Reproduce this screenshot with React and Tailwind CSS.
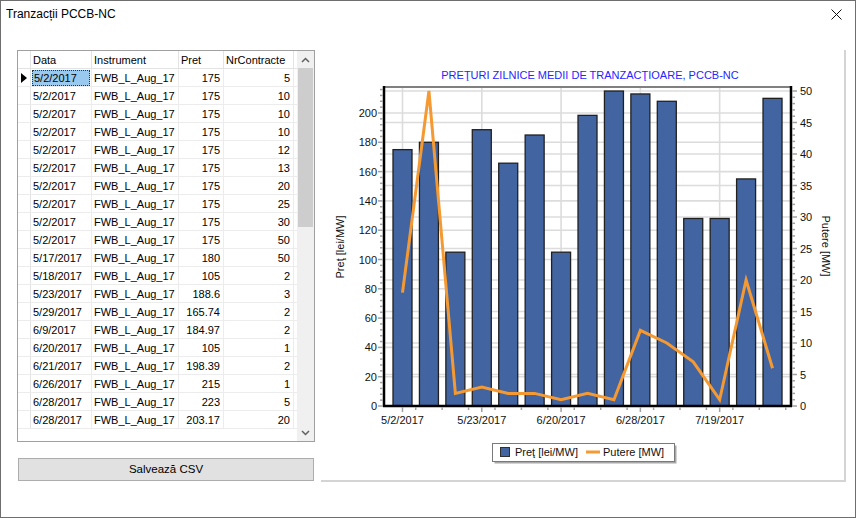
import React from "react";

const rows = [
  ["5/2/2017", "175", "5"],
  ["5/2/2017", "175", "10"],
  ["5/2/2017", "175", "10"],
  ["5/2/2017", "175", "10"],
  ["5/2/2017", "175", "12"],
  ["5/2/2017", "175", "13"],
  ["5/2/2017", "175", "20"],
  ["5/2/2017", "175", "25"],
  ["5/2/2017", "175", "30"],
  ["5/2/2017", "175", "50"],
  ["5/17/2017", "180", "50"],
  ["5/18/2017", "105", "2"],
  ["5/23/2017", "188.6", "3"],
  ["5/29/2017", "165.74", "2"],
  ["6/9/2017", "184.97", "2"],
  ["6/20/2017", "105", "1"],
  ["6/21/2017", "198.39", "2"],
  ["6/26/2017", "215", "1"],
  ["6/28/2017", "223", "5"],
  ["6/28/2017", "203.17", "20"],
];

const bars = [175, 180, 105, 188.6, 165.74, 184.97, 105, 198.39, 215, 213, 208, 128, 128, 155, 210];
const power = [18, 50, 2, 3, 2, 2, 1, 2, 1, 12, 10, 7, 1, 20, 6];

const X0 = 384, X1 = 791, Y0 = 87, Y1 = 406;
const cx = (i) => 402.5 + i * 26.43;
const ly = (v) => Y1 - v * 1.465;
const ry = (v) => Y1 - v * 6.3;

function Chart() {
  const leftMajor = [0, 20, 40, 60, 80, 100, 120, 140, 160, 180, 200];
  const leftMinor = [];
  for (let v = 0; v <= 216; v += 4) if (v % 20 !== 0) leftMinor.push(v);
  const rightMajor = [0, 5, 10, 15, 20, 25, 30, 35, 40, 45, 50];
  const rightMinor = [];
  for (let v = 0; v <= 50; v += 1) if (v % 5 !== 0) rightMinor.push(v);
  const xLabels = [
    [0, "5/2/2017"],
    [3, "5/23/2017"],
    [6, "6/20/2017"],
    [9, "6/28/2017"],
    [12, "7/19/2017"],
  ];
  const pts = power.map((v, i) => `${cx(i)},${ry(v)}`).join(" ");
  const font = { fontFamily: '"Liberation Sans", Arial, sans-serif' };
  return (
    <svg width="525" height="432" viewBox="321 50 525 432" style={font}>
      <text x="590" y="79" fontSize="11" fill="#2626ff" textAnchor="middle">
        PREŢURI ZILNICE MEDII DE TRANZACŢIOARE, PCCB-NC
      </text>
      {leftMajor.map((v) => (
        <line key={"lg" + v} x1={X0} x2={X1} y1={ly(v)} y2={ly(v)} stroke="#dcdcdc" strokeWidth="1.6" />
      ))}
      {rightMajor.map((v) => (
        <line key={"rg" + v} x1={X0} x2={X1} y1={ry(v)} y2={ry(v)} stroke="#dcdcdc" strokeWidth="1.6" />
      ))}
      {xLabels.map(([i]) => (
        <line key={"vg" + i} x1={cx(i)} x2={cx(i)} y1={Y0} y2={Y1} stroke="#dcdcdc" strokeWidth="1.6" />
      ))}
      {bars.map((v, i) => (
        <rect
          key={"b" + i}
          x={cx(i) - 9.5}
          y={ly(v)}
          width="19"
          height={Y1 - ly(v)}
          fill="#4264a0"
          stroke="#202020"
          strokeWidth="1.3"
        />
      ))}
      <polyline points={pts} fill="none" stroke="#f59a32" strokeWidth="3" strokeLinejoin="miter" />
      <line x1={X0} x2={X1} y1={Y0} y2={Y0} stroke="#808080" strokeWidth="2" />
      <line x1={X0} x2={X0} y1={Y0 - 1} y2={Y1 + 1} stroke="#000" strokeWidth="2.5" />
      <line x1={X1} x2={X1} y1={Y0 - 1} y2={Y1 + 1} stroke="#000" strokeWidth="2.5" />
      <line x1={X0 - 1} x2={X1 + 1} y1={Y1} y2={Y1} stroke="#000" strokeWidth="2.5" />
      {leftMinor.map((v) => (
        <line key={"lm" + v} x1={X0 - 4} x2={X0 - 1} y1={ly(v)} y2={ly(v)} stroke="#a0a0a0" strokeWidth="1.5" />
      ))}
      {leftMajor.map((v) => (
        <g key={"lt" + v}>
          <line x1={X0 - 6} x2={X0 - 1} y1={ly(v)} y2={ly(v)} stroke="#a0a0a0" strokeWidth="1.5" />
          <text x={X0 - 7} y={ly(v) + 4} fontSize="11" textAnchor="end" fill="#111">
            {v}
          </text>
        </g>
      ))}
      {rightMinor.map((v) => (
        <line key={"rm" + v} x1={X1 + 1} x2={X1 + 4} y1={ry(v)} y2={ry(v)} stroke="#a0a0a0" strokeWidth="1.5" />
      ))}
      {rightMajor.map((v) => (
        <g key={"rt" + v}>
          <line x1={X1 + 1} x2={X1 + 6} y1={ry(v)} y2={ry(v)} stroke="#a0a0a0" strokeWidth="1.5" />
          <text x={X1 + 9} y={ry(v) + 4} fontSize="11" fill="#111">
            {v}
          </text>
        </g>
      ))}
      {bars.map((_, i) => (
        <line key={"xt" + i} x1={cx(i) + 13.2} x2={cx(i) + 13.2} y1={Y1 + 1} y2={Y1 + 4} stroke="#a0a0a0" strokeWidth="1.5" />
      ))}
      {xLabels.map(([i, t]) => (
        <g key={"xl" + i}>
          <line x1={cx(i)} x2={cx(i)} y1={Y1 + 1} y2={Y1 + 6} stroke="#a0a0a0" strokeWidth="1.5" />
          <text x={cx(i)} y={Y1 + 18} fontSize="11" textAnchor="middle" fill="#111">
            {t}
          </text>
        </g>
      ))}
      <text x="0" y="0" fontSize="11" fill="#111" textAnchor="middle" transform="translate(344 247) rotate(-90)">
        Preţ [lei/MW]
      </text>
      <text x="0" y="0" fontSize="11" fill="#111" textAnchor="middle" transform="translate(822 246) rotate(90)">
        Putere [MW]
      </text>
      <rect x="494.5" y="445.5" width="182" height="18" fill="#a8a8a8" />
      <rect x="492.5" y="443.5" width="182" height="18" fill="#fff" stroke="#7a7a7a" strokeWidth="1" />
      <rect x="500.5" y="447.5" width="9" height="9" fill="#4264a0" stroke="#303030" strokeWidth="1" />
      <text x="515" y="456" fontSize="11" fill="#111">
        Preţ [lei/MW]
      </text>
      <line x1="586" x2="600" y1="452" y2="452" stroke="#f59a32" strokeWidth="3" />
      <text x="603" y="456" fontSize="11" fill="#111">
        Putere [MW]
      </text>
    </svg>
  );
}

function Grid() {
  return (
    <div className="relative flex h-[392px] w-[298px] border border-[#a0a0a0] bg-white text-[11px]">
      <div className="flex w-[279px] flex-col">
        <div className="flex h-[18px] border-b border-[#e3e3e3]">
          <div className="w-[13px] border-r border-[#e3e3e3]" />
          <div className="w-[61px] border-r border-[#e3e3e3] pl-[2px] pt-[2px] leading-[15px]">Data</div>
          <div className="w-[87px] border-r border-[#e3e3e3] pl-[2px] pt-[2px] leading-[15px]">Instrument</div>
          <div className="w-[45px] border-r border-[#e3e3e3] pl-[2px] pt-[2px] leading-[15px]">Pret</div>
          <div className="w-[70px] border-r border-[#e3e3e3] pl-[2px] pt-[2px] leading-[15px]">NrContracte</div>
        </div>
        {rows.map((r, i) => (
          <div key={i} className="flex h-[18px] border-b border-[#ececec]">
            <div className="flex w-[13px] items-center justify-center border-r border-[#e3e3e3]">
              {i === 0 && (
                <svg width="6" height="10" viewBox="0 0 6 10">
                  <polygon points="0,0 6,5 0,10" fill="#000" />
                </svg>
              )}
            </div>
            <div className="w-[61px] border-r border-[#ececec] pt-[1px] leading-[16px]">
              {i === 0 ? (
                <span className="ml-[1px] inline-block h-[16px] w-[58px] border border-dotted border-[#333] bg-[#99c9ef] pl-[1px] leading-[15px]">
                  {r[0]}
                </span>
              ) : (
                <span className="pl-[2px]">{r[0]}</span>
              )}
            </div>
            <div className="w-[87px] border-r border-[#ececec] pl-[2px] pt-[1px] leading-[16px]">FWB_L_Aug_17</div>
            <div className="w-[45px] border-r border-[#ececec] pr-[3px] pt-[1px] text-right leading-[16px]">{r[1]}</div>
            <div className="w-[70px] border-r border-[#ececec] pr-[3px] pt-[1px] text-right leading-[16px]">{r[2]}</div>
          </div>
        ))}
      </div>
      <div className="flex w-[17px] flex-col bg-[#f0f0f0]">
        <div className="flex h-[17px] items-center justify-center">
          <svg width="9" height="6" viewBox="0 0 9 6">
            <polyline points="1,5 4.5,1.5 8,5" fill="none" stroke="#606060" strokeWidth="1.5" />
          </svg>
        </div>
        <div className="mx-[1px] h-[159px] bg-[#cdcdcd]" />
        <div className="flex-1" />
        <div className="flex h-[17px] items-center justify-center">
          <svg width="9" height="6" viewBox="0 0 9 6">
            <polyline points="1,1 4.5,4.5 8,1" fill="none" stroke="#606060" strokeWidth="1.5" />
          </svg>
        </div>
      </div>
    </div>
  );
}

export default function App() {
  return (
    <div
      className="flex h-[518px] w-[856px] flex-col border border-[#6e6e6e] bg-white text-[12px] text-black"
      style={{ fontFamily: '"Liberation Sans", Arial, sans-serif' }}
    >
      <div className="flex h-[26px] shrink-0 items-center justify-between pl-[5px] pr-[13px]">
        <span className="text-[12px]">Tranzacții PCCB-NC</span>
        <svg width="11" height="11" viewBox="0 0 11 11">
          <path d="M0.5 0.5 L10.5 10.5 M10.5 0.5 L0.5 10.5" stroke="#111" strokeWidth="1" />
        </svg>
      </div>
      <div className="mt-[23px] flex pl-[16px]">
        <div className="flex flex-col">
          <Grid />
          <button className="mt-[16px] ml-[1px] h-[23px] w-[296px] border border-[#adadad] bg-[#e1e1e1] text-[11.5px] text-black">
            Salvează CSV
          </button>
        </div>
        <div className="ml-[6px] h-[432px] w-[525px] border-r-2 border-b-2 border-[#d4d4d4]">
          <Chart />
        </div>
      </div>
    </div>
  );
}
